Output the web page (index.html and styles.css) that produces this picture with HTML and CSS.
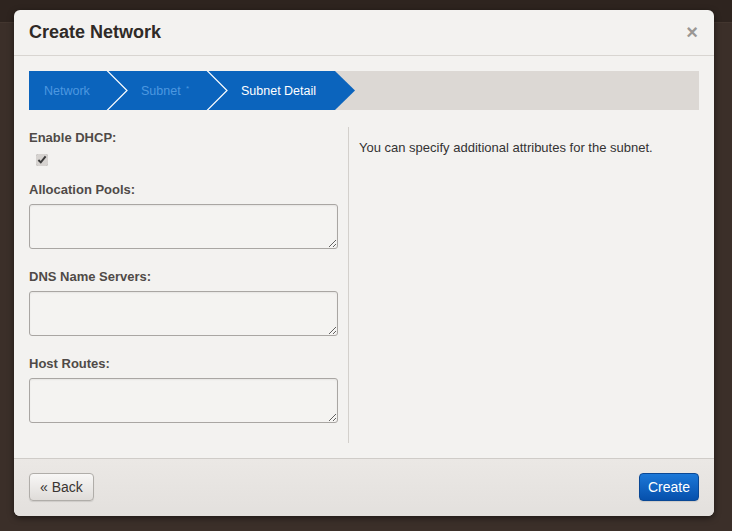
FILE: index.html
```html
<html lang="en">
<head>
    <meta charset="UTF-8">
    <meta name="viewport" content="width=device-width, initial-scale=1.0">
    <title>Create Network</title>
    <link rel="stylesheet" href="styles.css">
</head>
<body>
    <div class="modal">
        <!-- Header -->
        <div class="modal-header">
            <h3>Create Network</h3>
            <a href="#" class="close">&times;</a>
        </div>

        <div class="modal-body">
            <!-- Workflow steps -->
            <ul class="wizard">
                <li class="step step-first">Network</li>
                <li class="sep"><svg width="22" height="39" viewBox="0 0 22 39"><polyline points="0.5,-1 21,19.5 0.5,40" fill="none" stroke="#ffffff" stroke-width="1.2"/></svg></li>
                <li class="step step-second">Subnet <span class="req">*</span></li>
                <li class="sep"><svg width="22" height="39" viewBox="0 0 22 39"><polyline points="0.5,-1 21,19.5 0.5,40" fill="none" stroke="#ffffff" stroke-width="1.2"/></svg></li>
                <li class="step step-active">Subnet Detail</li>
                <li class="tip"><svg width="20" height="39" viewBox="0 0 20 39"><polygon points="0,0 20,19.5 0,39" fill="#0b64bd"/></svg></li>
            </ul>

            <div class="columns">
                <form class="left">
                    <label for="enable-dhcp">Enable DHCP:</label>
                    <input type="checkbox" id="enable-dhcp" checked />

                    <label for="allocation-pools">Allocation Pools:</label>
                    <textarea id="allocation-pools"></textarea>

                    <label for="dns-servers" class="spaced">DNS Name Servers:</label>
                    <textarea id="dns-servers"></textarea>

                    <label for="host-routes" class="spaced">Host Routes:</label>
                    <textarea id="host-routes"></textarea>
                </form>
                <div class="right">
                    <p>You can specify additional attributes for the subnet.</p>
                </div>
            </div>
        </div>

        <!-- Footer -->
        <div class="modal-footer">
            <button type="button" class="btn">&laquo; Back</button>
            <button type="button" class="btn btn-primary">Create</button>
        </div>
    </div>
</body>
</html>
```

FILE: styles.css
```css
body {
    font-family: "Liberation Sans", Arial, sans-serif;
    margin: 0;
    padding: 10px 18px 15px 14px;
    background: linear-gradient(to bottom, #2e241f 0, #2e241f 22px, #4a3d35 22px, #3b2f29 23px, #3b2f29 100%);
    height: 531px;
    box-sizing: border-box;
}

.modal {
    width: 700px;
    height: 506px;
    background-color: #f3f2f0;
    border-radius: 6px;
    box-shadow: 0 2px 6px rgba(0, 0, 0, 0.5);
    display: flex;
    flex-direction: column;
    overflow: hidden;
}

.modal-header {
    height: 45px;
    border-bottom: 1px solid #d8d5d1;
    padding: 0 15px;
    display: flex;
    align-items: center;
    justify-content: space-between;
}

.modal-header h3 {
    margin: 0;
    font-size: 18px;
    font-weight: bold;
    color: #2f2a27;
    padding-bottom: 1px;
}

.close {
    color: #9a9794;
    text-decoration: none;
    font-size: 20px;
    font-weight: bold;
    line-height: 20px;
    margin-top: -2px;
    margin-right: 1px;
}

.modal-body {
    flex: 1;
    padding: 15px 15px 15px 15px;
    display: flex;
    flex-direction: column;
}

.wizard {
    list-style: none;
    margin: 0;
    padding: 0;
    height: 39px;
    background-color: #dcd8d4;
    display: flex;
    font-size: 12.5px;
}

.step {
    background-color: #0b64bd;
    color: #4d98e0;
    line-height: 40px;
    box-sizing: border-box;
}

.step .req {
    font-size: 8px;
    position: relative;
    top: -4px;
    margin-left: 2px;
}

.step-first {
    width: 77px;
    padding-left: 15px;
}

.step-second {
    width: 78px;
    padding-left: 13px;
}

.step-active {
    width: 107px;
    padding-left: 13px;
    color: #ffffff;
}

.sep {
    width: 22px;
    height: 39px;
    background-color: #0b64bd;
}

.tip {
    width: 20px;
    height: 39px;
}

.sep svg,
.tip svg {
    display: block;
}

.columns {
    display: flex;
    margin-top: 17px;
    flex: 1;
}

.left {
    width: 309px;
    margin: 0;
    padding-top: 2px;
}

.right {
    flex: 1;
    border-left: 1px solid #d3d0cc;
    margin-left: 10px;
    padding-left: 10px;
}

.right p {
    margin: 13px 0 0 0;
    font-size: 13px;
    color: #333;
}

label {
    display: block;
    font-weight: bold;
    font-size: 13px;
    line-height: 18px;
    color: #4f4a47;
    margin-bottom: 5px;
}

label.spaced {
    margin-top: 19px;
}

input[type="checkbox"] {
    display: block;
    width: 12px;
    height: 12px;
    margin: 7px 0 15px 7px;
    accent-color: #d6d3d0;
}

textarea {
    display: block;
    width: 309px;
    height: 45px;
    box-sizing: border-box;
    margin: 0;
    border: 1px solid #a9a6a3;
    border-radius: 3px;
    background-color: #f4f3f1;
    box-shadow: inset 0 1px 2px rgba(0, 0, 0, 0.06);
}

.modal-footer {
    height: 58px;
    border-top: 1px solid #cfccc8;
    background: linear-gradient(to bottom, #ebe8e5, #e3e0dd);
    padding: 0 15px 1px 15px;
    display: flex;
    align-items: center;
    justify-content: space-between;
    box-sizing: border-box;
}

.btn {
    height: 28px;
    padding: 0 10px;
    font-family: "Liberation Sans", Arial, sans-serif;
    font-size: 14px;
    color: #3a3532;
    border: 1px solid #b0ada9;
    border-radius: 4px;
    background: linear-gradient(to bottom, #f8f7f6, #dfdcd9);
    box-shadow: 0 1px 1px rgba(0, 0, 0, 0.1);
    cursor: pointer;
}

.btn-primary {
    width: 60px;
    padding: 0;
    color: #ffffff;
    border-color: #0a4895;
    background: linear-gradient(to bottom, #1c78d8, #0650ac);
}
```
